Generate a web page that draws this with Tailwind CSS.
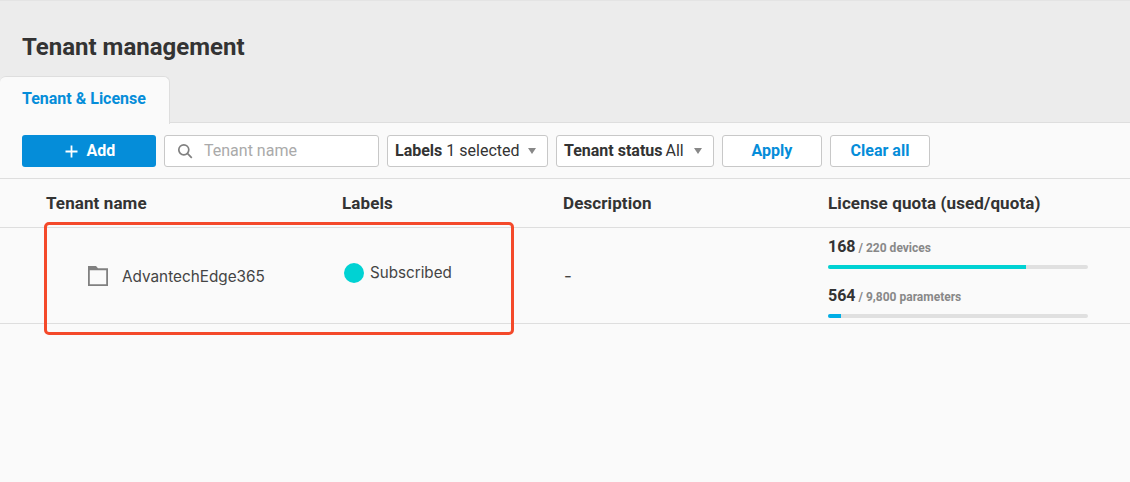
<!DOCTYPE html>
<html lang="en">
<head>
    <meta charset="UTF-8">
    <title>Tenant management</title>
    <script src="https://cdn.jsdelivr.net/npm/@tailwindcss/browser@4"></script>
</head>
<body class="relative h-[482px] w-[1130px] overflow-hidden bg-[#fafafa] font-['Roboto',sans-serif] text-[#333]">
    <!-- page header -->
    <div class="relative h-[123px] border-t border-b border-[#e4e4e4] border-b-[#dedede] bg-[#ececec]">
        <h1 class="pl-[22px] pt-[30px] text-[24px] leading-[32px] font-bold text-[#333]">Tenant management</h1>
        <div class="absolute left-0 top-[75px] h-[48px] w-[170px] rounded-t-[6px] border border-b-0 border-l-0 border-[#dedede] bg-[#fafafa] pl-[22px] pt-[12px] text-[16px] leading-[20px] font-bold text-[#058dd9]">Tenant &amp; License</div>
    </div>

    <!-- toolbar -->
    <div class="flex h-[56px] items-start gap-[8px] border-b border-[#dedede] pl-[22px] pt-[12px] text-[16px]">
        <button class="flex h-[32px] w-[134px] items-center justify-center gap-[9px] rounded-[3px] bg-[#058dd9] pl-[2px] font-bold text-white">
            <svg class="h-[13px] w-[13px]" viewBox="0 0 13 13" fill="none" stroke="white" stroke-width="1.8"><path d="M6.5 0.5v12M0.5 6.5h12"/></svg>
            Add
        </button>
        <div class="flex h-[32px] w-[215px] items-center rounded-[3px] border border-[#c8c8c8] bg-white pl-[12px] text-[#aaa]">
            <svg class="mr-[11px] h-[16px] w-[16px]" viewBox="0 0 16 16" fill="none" stroke="#808080" stroke-width="1.7"><circle cx="6.8" cy="6.8" r="5"/><path d="M10.6 10.6l4.2 4.2"/></svg>
            Tenant name
        </div>
        <div class="flex h-[32px] w-[161px] items-center rounded-[3px] border border-[#c8c8c8] bg-white pl-[7px]">
            <span class="font-bold">Labels</span><span class="ml-[4px]">1 selected</span>
            <span class="ml-[8px] h-0 w-0 border-x-[4px] border-t-[6px] border-x-transparent border-t-[#888]"></span>
        </div>
        <div class="flex h-[32px] w-[158px] items-center rounded-[3px] border border-[#c8c8c8] bg-white pl-[7px]">
            <span class="font-bold">Tenant status</span><span class="ml-[3px]">All</span>
            <span class="ml-[10px] h-0 w-0 border-x-[4px] border-t-[6px] border-x-transparent border-t-[#888]"></span>
        </div>
        <button class="h-[32px] w-[100px] rounded-[3px] border border-[#c8c8c8] bg-white font-bold text-[#058dd9]">Apply</button>
        <button class="h-[32px] w-[100px] rounded-[3px] border border-[#c8c8c8] bg-white font-bold text-[#058dd9]">Clear all</button>
    </div>

    <!-- table -->
    <div class="grid h-[49px] grid-cols-[296px_221px_265px_1fr] items-center border-b border-[#dedede] pl-[46px] pt-[2px] text-[17px] font-bold tracking-[0.1px]">
        <div>Tenant name</div>
        <div>Labels</div>
        <div>Description</div>
        <div>License quota (used/quota)</div>
    </div>
    <div class="flex h-[96px] border-b border-[#dedede]">
        <div class="flex w-[342px] items-center pl-[88px] font-['Inter',sans-serif] text-[15.3px] text-[#444]">
            <svg class="mr-[14px] h-[20px] w-[20px]" viewBox="0 0 20 20"><path fill="#808080" fill-rule="evenodd" d="M0 0h8l2 2.2h10V20H0zM1.8 4.2v14h16.4v-14z"/></svg>
            <span class="mt-[3px]">AdvantechEdge365</span>
        </div>
        <div class="flex w-[221px] items-center gap-[6px] pb-[6px] pl-[2px] font-['Inter',sans-serif] text-[15.2px] text-[#444]">
            <span class="h-[20px] w-[20px] rounded-full bg-[#00d2d3]"></span>
            <span class="mt-[2px]">Subscribed</span>
        </div>
        <div class="flex w-[265px] items-center pl-[1px] pt-[3px] font-['Inter',sans-serif] text-[17px] text-[#444]">-</div>
        <div class="w-[260px] pt-[9px]">
            <div class="flex items-baseline gap-[3px] leading-[20px]">
                <span class="text-[16px] font-bold">168</span>
                <span class="text-[12px] font-bold text-[#888]">/ 220 devices</span>
            </div>
            <div class="mt-[7px] h-[4px] overflow-hidden rounded-full bg-[#e0e0e0]"><div class="h-full bg-[#00d2d3]" style="width: 76.2%"></div></div>
            <div class="mt-[17px] flex items-baseline gap-[3px] leading-[20px]">
                <span class="text-[16px] font-bold">564</span>
                <span class="text-[12px] font-bold text-[#888]">/ 9,800 parameters</span>
            </div>
            <div class="mt-[7px] h-[4px] overflow-hidden rounded-full bg-[#e0e0e0]"><div class="h-full bg-[#00aee6]" style="width: 5%"></div></div>
        </div>
    </div>

    <!-- red highlight annotation -->
    <div class="absolute left-[44px] top-[222px] h-[113px] w-[470px] rounded-[5px] border-[3px] border-[#f4492a]"></div>
</body>
</html>
